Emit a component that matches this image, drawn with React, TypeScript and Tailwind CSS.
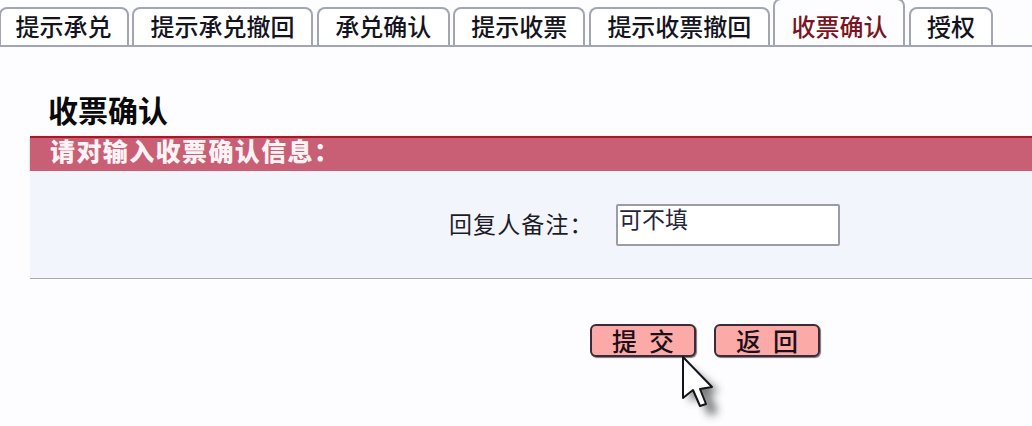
const FONT = "font-['Noto_Sans_CJK_SC','Liberation_Sans',sans-serif]"

const tabs = [
  { label: "提示承兑", width: "w-[130px]" },
  { label: "提示承兑撤回", width: "w-[181px]" },
  { label: "承兑确认", width: "w-[133px]" },
  { label: "提示收票", width: "w-[132px]" },
  { label: "提示收票撤回", width: "w-[181px]" },
  { label: "收票确认", width: "w-[132px]", active: true },
  { label: "授权", width: "w-[84px]" },
]

function Tabs() {
  return (
    <div className="flex h-[47px] items-end gap-[3.6px] border-b-2 border-[#a2a5b5]">
      {tabs.map((tab, i) => (
        <div
          key={tab.label}
          className={[
            "flex shrink-0 items-center justify-center rounded-t-lg border-2 border-b-0 border-[#a2a5b5] text-[24px] font-medium",
            i === 0 ? "-ml-[1.5px]" : "",
            tab.active
              ? "h-[47px] bg-[#fdfdff] pt-[9px] text-[#7a1420]"
              : "h-[38px] bg-white text-[#14141e]",
            tab.width,
          ].join(" ")}
        >
          <span className="-translate-y-[1px]">{tab.label}</span>
        </div>
      ))}
    </div>
  )
}

function PinkButton({ children }: { children: string }) {
  return (
    <button className="flex h-[33px] w-[106px] items-center justify-center gap-[12px] rounded-md border-2 border-[#3a2a3a] bg-[#fcaaa8] text-[25px] font-medium leading-none text-[#1c1018] shadow-[1px_1px_1px_#777]">
      {children.split(" ").map((c) => (
        <span key={c}>{c}</span>
      ))}
    </button>
  )
}

function Pointer() {
  return (
    <svg
      className="absolute left-[676px] top-[350px]"
      width="60"
      height="76"
      viewBox="0 0 60 76"
    >
      <defs>
        <filter id="blur" x="-50%" y="-50%" width="200%" height="200%">
          <feGaussianBlur stdDeviation="4" />
        </filter>
      </defs>
      <path
        d="M14 18 L14 52 L24 46 L33 66 L42 62 L34 44 L43 41 Z"
        fill="#55585a"
        opacity="0.8"
        filter="url(#blur)"
      />
      <path
        d="M7 7 L7 48 L17 40 L24 56 L30 54 L24 39 L36 37 Z"
        fill="#fff"
        stroke="#15151a"
        strokeWidth="2"
        strokeLinejoin="round"
      />
    </svg>
  )
}

export default function App() {
  return (
    <div className={`relative h-[426px] w-[1032px] overflow-hidden bg-[#fdfdff] ${FONT}`}>
      <Tabs />

      <h1 className="ml-[48px] mt-[42px] h-[47px] text-[30px] font-bold leading-[40px] text-[#0a0a0a]">
        收票确认
      </h1>

      <div className="ml-[30px] h-[35px] border-t-2 border-[#b01525] bg-[#c95f75] pl-[20px] text-[25px] font-black leading-[25px] tracking-[1.4px] text-[#fdf3f5] shadow-[0_1px_2px_#b9b9c4]">
        请对输入收票确认信息：
      </div>

      <div className="ml-[30px] flex h-[108px] items-start border-b-[1.5px] border-[#a9a9b4] bg-[#f3f5fd] pl-[419px] pt-[33px]">
        <label className="w-[167px] text-[23px] leading-[38px] tracking-[1.1px] text-[#1c1c26]">回复人备注：</label>
        <div className="h-[42px] w-[224px] rounded-[2px] border-2 border-[#9c9ca8] bg-white pl-[1px] text-[23px] leading-[24px] text-[#26263a]">
          可不填
        </div>
      </div>

      <div className="ml-[590px] mt-[45px] flex gap-[18px]">
        <PinkButton>提 交</PinkButton>
        <PinkButton>返 回</PinkButton>
      </div>

      <Pointer />
    </div>
  )
}
